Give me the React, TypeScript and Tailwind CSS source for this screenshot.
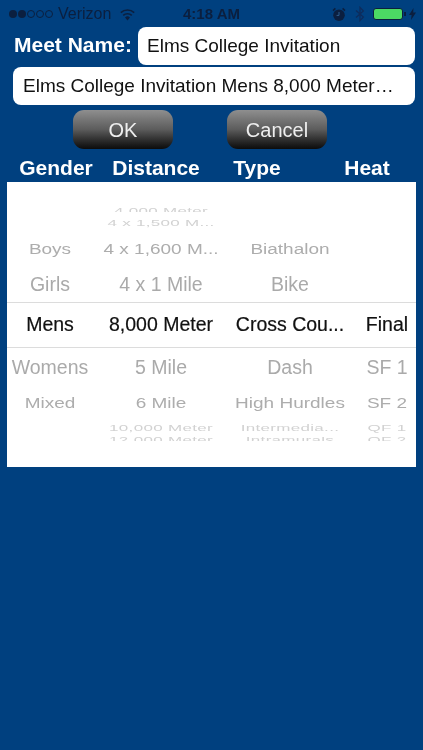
import React from "react";

const H = ["h-[4px] mb-[3px]", "h-[14px]", "h-[38px]", "h-[34px]", "h-[48px]", "h-[36px]", "h-[34px]", "h-[16px]", "h-[4px] mt-[2px]"];

const far = "text-[17px] text-[#d2d2d2] scale-y-[0.55] [letter-spacing:0.3px]";
const near2 = "text-[19px] text-[#adadad] scale-y-[0.8]";
const near1 = "text-[19.5px] text-[#aaaaaa] translate-y-[1px]";
const sel = "text-[19.5px] text-[#111] [-webkit-text-stroke:0.2px_#111]";

const styles = [far, far, near2, near1, sel, near1, near2, far, far];

const cols: { w: string; items: string[] }[] = [
  { w: "w-[86px]", items: ["", "", "Boys", "Girls", "Mens", "Womens", "Mixed", "", ""] },
  { w: "w-[136px]", items: ["4,000 Meter", "4 x 1,500 M...", "4 x 1,600 M...", "4 x 1 Mile", "8,000 Meter", "5 Mile", "6 Mile", "10,000 Meter", "12,000 Meter"] },
  { w: "w-[122px]", items: ["", "", "Biathalon", "Bike", "Cross Cou...", "Dash", "High Hurdles", "Intermedia...", "Intramurals"] },
  { w: "w-[65px] pl-[7px]", items: ["", "", "", "", "Final", "SF 1", "SF 2", "QF 1", "QF 2"] },
];

function Column({ w, items }: { w: string; items: string[] }) {
  return (
    <div className={`${w} flex flex-col pt-[26px]`}>
      {items.map((t, i) => (
        <div key={i} className={`${H[i]} flex justify-center items-center overflow-hidden`}>
          <span className={`block whitespace-nowrap leading-none ${styles[i]}`}>{t}</span>
        </div>
      ))}
    </div>
  );
}

export default function App() {
  return (
    <div className="relative w-[423px] h-[750px] overflow-hidden bg-[#00407f] blur-[0.3px] [font-family:'Liberation_Sans',Arial,sans-serif]">
      {/* status bar */}
      <div className="h-[27px] flex items-center text-[#0b1f3f] pt-[1px]">
        <div className="w-[150px] flex items-center pl-[9px]">
          <div className="flex items-center gap-[1px]">
            {[0, 1].map((i) => (
              <span key={i} className="w-[8px] h-[8px] rounded-full bg-[#0b1f3f]" />
            ))}
            {[2, 3, 4].map((i) => (
              <span key={i} className="w-[8px] h-[8px] rounded-full border border-[#0b1f3f]" />
            ))}
          </div>
          <span className="ml-[5px] text-[16px]">Verizon</span>
          <svg className="ml-[8px]" width="17" height="13" viewBox="0 0 17 13">
            <path d="M8.5 12.5 6 9.5a3.6 3.6 0 0 1 5 0Z" fill="#0b1f3f" />
            <path d="M4.2 7.4a6.4 6.4 0 0 1 8.6 0M1.8 4.6a10 10 0 0 1 13.4 0" fill="none" stroke="#0b1f3f" strokeWidth="1.7" />
          </svg>
        </div>
        <span className="ml-[33px] font-bold text-[15px]">4:18 AM</span>
        <div className="ml-auto flex items-center pr-[7px]">
          <svg width="14" height="15" viewBox="0 0 14 15">
            <circle cx="7" cy="8.2" r="5.8" fill="#0b1f3f" />
            <path d="M7 5v3.4H4.6" fill="none" stroke="#2d5c8c" strokeWidth="1" />
            <path d="M1 3.6 3.4 1.4M13 3.6l-2.4-2.2" stroke="#0b1f3f" strokeWidth="1.6" />
          </svg>
          <svg className="ml-[9px]" width="10" height="16" viewBox="0 0 10 16">
            <path d="M1 4.4 8.4 11 5 14.6V1.4L8.4 5 1 11.6" fill="none" stroke="#0d2c5c" strokeWidth="1.3" />
          </svg>
          <div className="ml-[8px] w-[30px] h-[12px] rounded-[3px] border border-[#0b1f3f] bg-[#4cd964]" />
          <div className="ml-[1px] w-[2px] h-[4px] bg-[#0b1f3f]" />
          <svg className="ml-[3px]" width="7" height="12" viewBox="0 0 7 12">
            <path d="M4.5 0 0 7h2.6L2 12l5-7.4H4.2Z" fill="#0b1f3f" />
          </svg>
        </div>
      </div>

      {/* meet name */}
      <div className="flex items-center h-[38px] pl-[14px]">
        <span className="w-[124px] text-white font-bold text-[21px] whitespace-nowrap -mt-[3px]">Meet Name:</span>
        <div className="w-[277px] h-[38px] bg-white rounded-[8px] flex items-center pl-[9px] text-[19px] text-[#111]">
          Elms College Invitation
        </div>
      </div>
      <div className="mt-[2px] ml-[13px] w-[402px] h-[38px] bg-white rounded-[8px] flex items-center pl-[10px] text-[19px] text-[#111] whitespace-nowrap">
        Elms College Invitation Mens 8,000 Meter…
      </div>

      {/* buttons */}
      <div className="mt-[5px] flex pl-[73px] gap-[54px]">
        {["OK", "Cancel"].map((b) => (
          <div key={b} className="w-[100px] h-[39px] rounded-[11px] bg-gradient-to-b from-[#8f8f8f] via-[#5c5c5c] to-[#0c0c0c] flex items-center justify-center text-[#eeeeee] text-[20px]">
            {b}
          </div>
        ))}
      </div>

      {/* headers */}
      <div className="h-[33px] pt-[4px] flex items-center text-white font-bold text-[21px]">
        <span className="w-[112px] text-center">Gender</span>
        <span className="w-[88px] text-center whitespace-nowrap">Distance</span>
        <span className="w-[114px] text-center">Type</span>
        <span className="w-[106px] text-center">Heat</span>
      </div>

      {/* picker */}
      <div className="relative ml-[7px] w-[409px] h-[285px] bg-white flex">
        {cols.map((c, i) => (
          <Column key={i} w={c.w} items={c.items} />
        ))}
        <div className="absolute left-0 right-0 top-[120px] h-[46px] border-y border-[#dcdcdc]" />
      </div>
    </div>
  );
}
